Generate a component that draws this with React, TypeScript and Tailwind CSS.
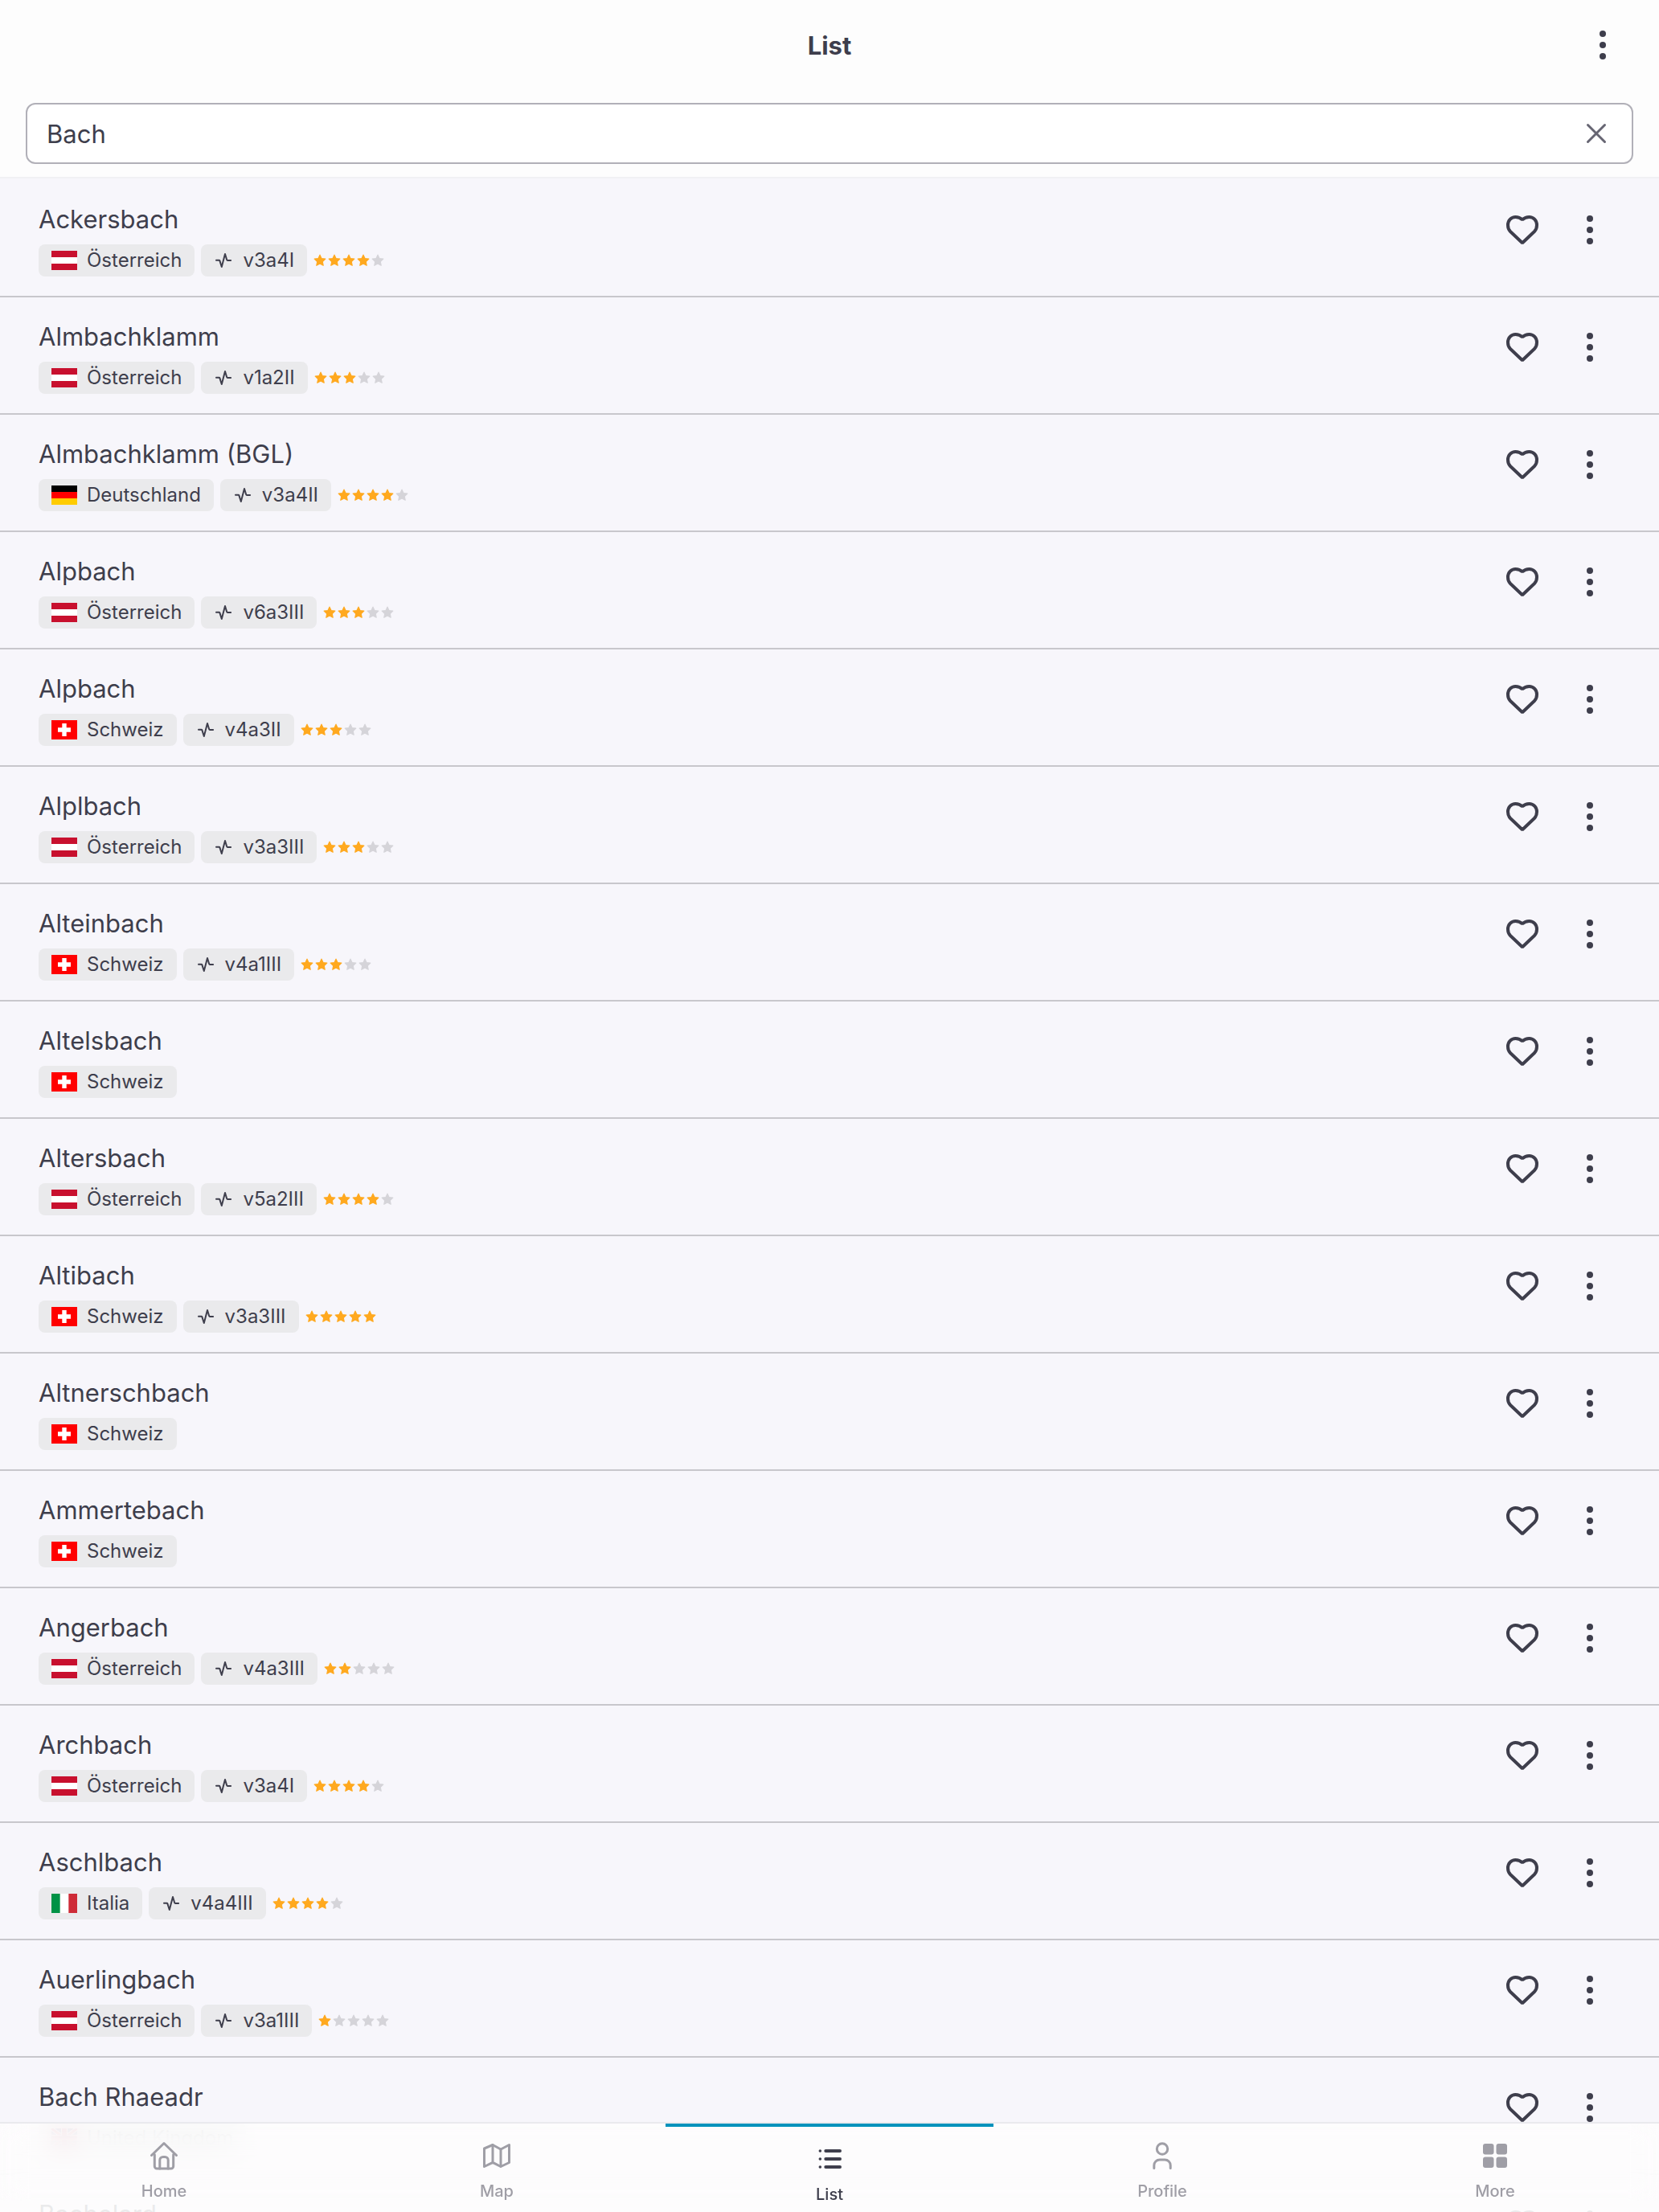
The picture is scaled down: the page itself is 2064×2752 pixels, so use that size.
import type { ReactNode } from "react";

type Country = "at" | "de" | "ch" | "it" | "gb";

interface Canyon {
  name: string;
  country: Country;
  grade?: string;
  stars?: number;
}

const countryNames: Record<Country, string> = {
  at: "Österreich",
  de: "Deutschland",
  ch: "Schweiz",
  it: "Italia",
  gb: "United Kingdom",
};

const canyons: Canyon[] = [
  { name: "Ackersbach", country: "at", grade: "v3a4I", stars: 4 },
  { name: "Almbachklamm", country: "at", grade: "v1a2II", stars: 3 },
  { name: "Almbachklamm (BGL)", country: "de", grade: "v3a4II", stars: 4 },
  { name: "Alpbach", country: "at", grade: "v6a3III", stars: 3 },
  { name: "Alpbach", country: "ch", grade: "v4a3II", stars: 3 },
  { name: "Alplbach", country: "at", grade: "v3a3III", stars: 3 },
  { name: "Alteinbach", country: "ch", grade: "v4a1III", stars: 3 },
  { name: "Altelsbach", country: "ch" },
  { name: "Altersbach", country: "at", grade: "v5a2III", stars: 4 },
  { name: "Altibach", country: "ch", grade: "v3a3III", stars: 5 },
  { name: "Altnerschbach", country: "ch" },
  { name: "Ammertebach", country: "ch" },
  { name: "Angerbach", country: "at", grade: "v4a3III", stars: 2 },
  { name: "Archbach", country: "at", grade: "v3a4I", stars: 4 },
  { name: "Aschlbach", country: "it", grade: "v4a4III", stars: 4 },
  { name: "Auerlingbach", country: "at", grade: "v3a1III", stars: 1 },
  { name: "Bach Rhaeadr", country: "gb" },
  { name: "Bachelard", country: "ch" },
];

function Flag({ country }: { country: Country }) {
  return (
    <svg viewBox="0 0 32 24" className="h-6 w-8" aria-hidden="true">
      {country === "at" && (
        <>
          <path fill="#fff" d="M0 0h32v24H0z" />
          <path fill="#c8102e" d="M0 0h32v8H0zM0 16h32v8H0z" />
        </>
      )}
      {country === "de" && (
        <>
          <path fill="#000" d="M0 0h32v8H0z" />
          <path fill="#f00" d="M0 8h32v8H0z" />
          <path fill="#fc0" d="M0 16h32v8H0z" />
        </>
      )}
      {country === "ch" && (
        <>
          <path fill="#f00" d="M0 0h32v24H0z" />
          <path fill="#fff" d="M13.3 4h5.400v5.300H24v5.400h-5.300V20h-5.400v-5.300H8V9.300h5.300z" />
        </>
      )}
      {country === "it" && (
        <>
          <path fill="#fff" d="M0 0h32v24H0z" />
          <path fill="#009246" d="M0 0h10.67v24H0z" />
          <path fill="#ce2b37" d="M21.33 0H32v24H21.33z" />
        </>
      )}
      {country === "gb" && (
        <>
          <path fill="#012169" d="M0 0h32v24H0z" />
          <path stroke="#fff" strokeWidth="5" d="M0 0l32 24M32 0L0 24" />
          <path stroke="#c8102e" strokeWidth="3" d="M0 0l32 24M32 0L0 24" />
          <path stroke="#fff" strokeWidth="8" d="M16 0v24M0 12h32" />
          <path stroke="#c8102e" strokeWidth="6" d="M16 0v24M0 12h32" />
        </>
      )}
    </svg>
  );
}

function Dots() {
  return (
    <svg viewBox="0 0 48 48" className="size-12" fill="currentColor" aria-hidden="true">
      <circle cx="24" cy="10" r="4" />
      <circle cx="24" cy="24" r="4" />
      <circle cx="24" cy="38" r="4" />
    </svg>
  );
}

function Heart() {
  return (
    <svg
      viewBox="0 0 48 48"
      className="size-12"
      fill="none"
      stroke="currentColor"
      strokeWidth="4"
      strokeLinejoin="bevel"
      aria-hidden="true"
    >
      <path d="M24 11.300C21.500 9 18.500 8 15.500 8C10 8 6 12.500 6 18C6 21.300 7 24 9 26L24 40.300L39 26C41 24 42 21.300 42 18C42 12.500 38 8 32.500 8C29.500 8 26.500 9 24 11.300Z" />
    </svg>
  );
}

function Pulse() {
  return (
    <svg
      viewBox="0 0 24 24"
      className="size-6"
      fill="none"
      stroke="currentColor"
      strokeWidth="2"
      strokeLinecap="round"
      strokeLinejoin="round"
      aria-hidden="true"
    >
      <path d="M3 11.800h3.500q.7 0 .9.600L9.800 20 14 4l2.200 7.300q.2.700.9.700h4" />
    </svg>
  );
}

function Stars({ count }: { count: number }) {
  return (
    <div className="flex gap-0.5" role="img" aria-label={`${count} of 5 stars`}>
      {[1, 2, 3, 4, 5].map((n) => (
        <svg key={n} viewBox="0 0 14 14" className="size-4" aria-hidden="true">
          <path
            className={n <= count ? "fill-[#ffa91f] stroke-[#ffa91f]" : "fill-[#d5d4d9] stroke-[#d5d4d9]"}
            strokeLinejoin="round"
            d="M7 1l1.800 3.900 4.200.5-3.100 2.900.8 4.200L7 10.400 3.300 12.500l.8-4.200L1 5.400l4.200-.5z"
          />
        </svg>
      ))}
    </div>
  );
}

function Chip({ icon, label }: { icon: ReactNode; label: string }) {
  return (
    <div className="flex h-10 items-center gap-3 rounded-lg bg-[#eaeaec] px-4 text-2xl">
      {icon}
      <span>{label}</span>
    </div>
  );
}

function CanyonRow({ canyon }: { canyon: Canyon }) {
  return (
    <li className="flex h-[146px] shrink-0 justify-between border-b-2 border-[#c8c7cc] pr-[62px] pl-12">
      <div className="flex flex-col pt-7">
        <h2 className="text-[31px] leading-[42px]">{canyon.name}</h2>
        <div className="mt-2.5 flex items-center gap-2">
          <Chip icon={<Flag country={canyon.country} />} label={countryNames[canyon.country]} />
          {canyon.grade && <Chip icon={<Pulse />} label={canyon.grade} />}
          {canyon.stars && <Stars count={canyon.stars} />}
        </div>
      </div>
      <div className="flex gap-9 pt-[38px]">
        <button type="button" className="size-12" aria-label={`Add ${canyon.name} to favorites`}>
          <Heart />
        </button>
        <button type="button" className="size-12" aria-label={`Options for ${canyon.name}`}>
          <Dots />
        </button>
      </div>
    </li>
  );
}

const tabs: { label: string; active?: boolean; icon: ReactNode }[] = [
  {
    label: "Home",
    icon: (
      <g>
        <path d="M4.500 19.500L20 4.500l15.500 15" />
        <path d="M8.300 18.500V33a3 3 0 0 0 3 3h17.400a3 3 0 0 0 3-3V18.500" />
        <path d="M14.800 36V25.500a4 4 0 0 1 4-4h2.400a4 4 0 0 1 4 4V36" />
      </g>
    ),
  },
  {
    label: "Map",
    icon: (
      <g>
        <path d="M4.500 11L15 6.500 25 12l10.500-5.500v22L25 33.500l-8-4.200q-2-1-4 0l-8.500 4.200z" />
        <path d="M15 6.500v22M25 12v21" />
      </g>
    ),
  },
  {
    label: "List",
    active: true,
    icon: (
      <g strokeWidth="4">
        <path d="M15.300 10H33M15.300 20H33M15.300 30H33" />
        <path strokeWidth="3.500" d="M8.300 10h.1M8.300 20h.1M8.300 30h.1" />
      </g>
    ),
  },
  {
    label: "Profile",
    icon: (
      <g>
        <circle cx="20" cy="11.500" r="6.700" />
        <path d="M9.800 35.500V32a7 7 0 0 1 7-7h6.400a7 7 0 0 1 7 7v3.500" />
      </g>
    ),
  },
  {
    label: "More",
    icon: (
      <g fill="currentColor" stroke="none">
        <rect x="5" y="5" width="13.500" height="13.500" rx="3" />
        <rect x="21.500" y="5" width="13.500" height="13.500" rx="3" />
        <rect x="5" y="21.500" width="13.500" height="13.500" rx="3" />
        <rect x="21.500" y="21.500" width="13.500" height="13.500" rx="3" />
      </g>
    ),
  },
];

function TabBar() {
  return (
    <nav className="fixed inset-x-0 bottom-0 flex h-28 justify-between border-t-2 border-[#eaeaee] bg-[#fdfdfd]/90">
      {/* Blurs the rows that scroll under the upper part of the bar */}
      <div className="absolute inset-x-0 top-0 h-24 backdrop-blur-lg" />
      {tabs.map((tab) => (
        <a
          key={tab.label}
          href={`#${tab.label.toLowerCase()}`}
          className={
            tab.active
              ? "relative flex w-[408px] flex-col items-center gap-3 border-t-4 border-[#0092bc] pt-5 text-[#3e3e4c]"
              : "relative flex w-[408px] flex-col items-center gap-3 pt-5 text-[#9f9ea6]"
          }
        >
          <svg
            viewBox="0 0 40 40"
            className="size-10"
            fill="none"
            stroke="currentColor"
            strokeWidth="3"
            strokeLinecap="round"
            strokeLinejoin="round"
            aria-hidden="true"
          >
            {tab.icon}
          </svg>
          <span className="text-xl leading-6 font-medium">{tab.label}</span>
        </a>
      ))}
    </nav>
  );
}

export default function App() {
  return (
    <div className="h-screen overflow-hidden bg-[#f7f6fb] font-['Inter','Liberation_Sans',sans-serif] text-[#3e3e4c]">
      <header className="border-b-2 border-[#f1f1f4] bg-[#fdfdfd]">
        <div className="grid h-28 grid-cols-[1fr_auto_1fr] items-center px-[46px]">
          <h1 className="col-start-2 pt-0.5 text-[31px] leading-10 font-bold">List</h1>
          <button type="button" className="size-12 justify-self-end" aria-label="More options">
            <Dots />
          </button>
        </div>
        <div className="px-8 py-4">
          <label className="flex h-19 items-center rounded-xl border-2 border-[#b1b0b8] bg-white px-6">
            <input
              type="text"
              defaultValue="Bach"
              aria-label="Search"
              className="min-w-0 flex-1 pt-0.5 text-[31px] leading-10 outline-none"
            />
            <button type="button" className="size-10 text-[#666572]" aria-label="Clear search">
              <svg
                viewBox="0 0 40 40"
                className="size-10"
                fill="none"
                stroke="currentColor"
                strokeWidth="3"
                strokeLinecap="round"
                aria-hidden="true"
              >
                <path d="M9.500 9.500l21 21M30.500 9.500l-21 21" />
              </svg>
            </button>
          </label>
        </div>
      </header>

      <ul className="flex flex-col pt-0.5">
        {canyons.map((canyon, i) => (
          <CanyonRow key={i} canyon={canyon} />
        ))}
      </ul>

      <TabBar />
    </div>
  );
}
